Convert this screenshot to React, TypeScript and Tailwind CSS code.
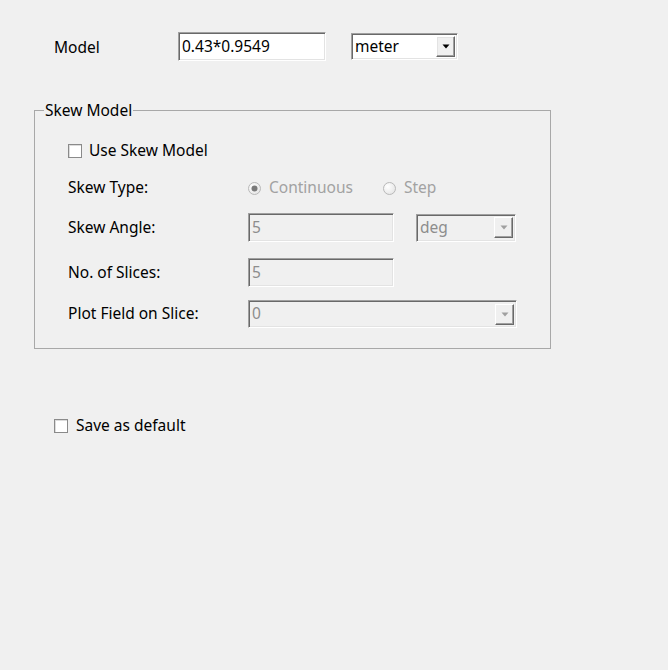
import React from "react";

const font = { fontFamily: '"Noto Sans", "Open Sans", sans-serif' };

function Sunken({ w, h, disabled, children }: { w: string; h: string; disabled?: boolean; children?: React.ReactNode }) {
  return (
    <div
      className={`${w} ${h} flex items-center border border-t-[#a0a0a0] border-l-[#a0a0a0] border-b-white border-r-white shadow-[inset_1px_1px_0_#696969,inset_-1px_-1px_0_#e3e3e3] ${disabled ? "bg-[#f0f0f0] text-[#8d8d8d]" : "bg-white text-black"}`}
    >
      {children}
    </div>
  );
}

function Arrow({ disabled }: { disabled?: boolean }) {
  return (
    <div
      className={`w-[19px] h-[21px] mr-[2px] flex items-center justify-center border border-t-white border-l-white border-b-[#696969] border-r-[#696969] ${disabled ? "bg-[#f0f0f0] shadow-[inset_-1px_-1px_0_#a0a0a0]" : "bg-[#f0f0f0] shadow-[inset_-1px_-1px_0_#a0a0a0,inset_1px_1px_0_#e3e3e3]"}`}
    >
      <svg width="8" height="5" viewBox="0 0 8 5">
        <polygon points="0.5,0.5 7.5,0.5 4,4.5" fill={disabled ? "#a0a0a0" : "#000"} />
      </svg>
    </div>
  );
}

function Checkbox() {
  return <div className="w-[14px] h-[14px] bg-white border border-[#8a8a8a] shadow-[inset_1px_1px_0_#dcdcdc]" />;
}

function Radio({ checked }: { checked?: boolean }) {
  return (
    <svg width="13" height="13" viewBox="0 0 13 13">
      <defs>
        <radialGradient id={checked ? "rg1" : "rg2"} cx="0.35" cy="0.35" r="0.7">
          <stop offset="0" stopColor="#ffffff" />
          <stop offset="1" stopColor="#e6e6e6" />
        </radialGradient>
      </defs>
      <circle cx="6.5" cy="6.5" r="6" fill={`url(#${checked ? "rg1" : "rg2"})`} stroke="#b8b8b8" strokeWidth="1" />
      {checked && <circle cx="6.5" cy="6.5" r="3" fill="#7a7a7a" />}
    </svg>
  );
}

export default function App() {
  return (
    <div className="w-[668px] h-[670px] bg-[#f0f0f0] text-[15.5px] text-black pt-[32px]" style={font}>
      <div className="flex items-center h-[29px] pl-[54px]">
        <div className="w-[124px] pt-[2px]">Model</div>
        <Sunken w="w-[148px]" h="h-[29px]">
          <span className="pl-[3px]">0.43*0.9549</span>
        </Sunken>
        <div className="ml-[25px]">
          <Sunken w="w-[107px]" h="h-[27px]">
            <span className="pl-[3px] flex-1">meter</span>
            <Arrow />
          </Sunken>
        </div>
      </div>

      <div className="relative ml-[34px] mt-[49px] w-[517px] h-[239px] border border-[#a8a8a8] pl-[33px]">
        <div className="absolute left-[9px] -top-[11px] px-[1px] bg-[#f0f0f0] leading-[20px]">Skew Model</div>

        <div className="flex items-center h-[20px] mt-[30px]">
          <Checkbox />
          <span className="ml-[7px]">Use Skew Model</span>
        </div>

        <div className="flex items-center h-[20px] mt-[17px]">
          <div className="w-[180px]">Skew Type:</div>
          <div className="flex items-center text-[#a2a2a2]">
            <Radio checked />
            <span className="ml-[8px]">Continuous</span>
          </div>
          <div className="flex items-center text-[#a2a2a2] ml-[30px]">
            <Radio />
            <span className="ml-[8px]">Step</span>
          </div>
        </div>

        <div className="flex items-center h-[29px] mt-[15px]">
          <div className="w-[180px]">Skew Angle:</div>
          <Sunken w="w-[146px]" h="h-[29px]" disabled>
            <span className="pl-[3px]">5</span>
          </Sunken>
          <div className="ml-[22px]">
            <Sunken w="w-[100px]" h="h-[28px]" disabled>
              <span className="pl-[3px] flex-1">deg</span>
              <Arrow disabled />
            </Sunken>
          </div>
        </div>

        <div className="flex items-center h-[29px] mt-[16px]">
          <div className="w-[180px]">No. of Slices:</div>
          <Sunken w="w-[146px]" h="h-[29px]" disabled>
            <span className="pl-[3px]">5</span>
          </Sunken>
        </div>

        <div className="flex items-center h-[28px] mt-[13px]">
          <div className="w-[180px]">Plot Field on Slice:</div>
          <Sunken w="w-[269px]" h="h-[28px]" disabled>
            <span className="pl-[3px] flex-1">0</span>
            <Arrow disabled />
          </Sunken>
        </div>
      </div>

      <div className="flex items-center h-[20px] mt-[67px] pl-[54px]">
        <Checkbox />
        <span className="ml-[8px]">Save as default</span>
      </div>
    </div>
  );
}
